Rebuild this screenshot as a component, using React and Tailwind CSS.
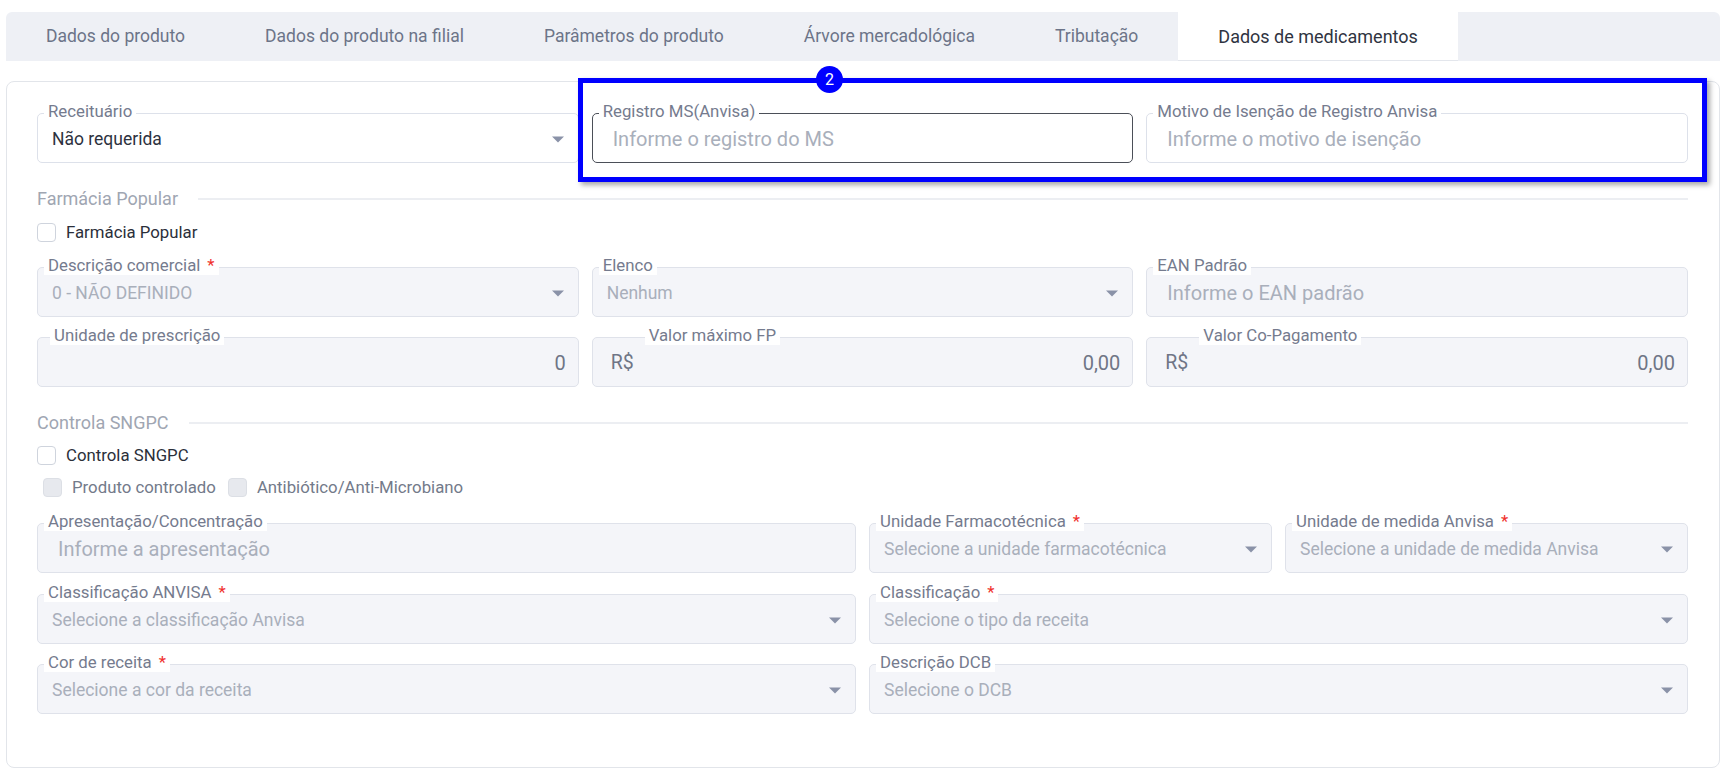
import React from 'react'

const font = { fontFamily: 'Roboto, "Noto Sans", sans-serif' }

const tabs = [
    'Dados do produto',
    'Dados do produto na filial',
    'Parâmetros do produto',
    'Árvore mercadológica',
    'Tributação',
    'Dados de medicamentos',
]

function Caret() {
    return (
        <svg width="12" height="7" viewBox="0 0 12 7" className="shrink-0">
            <path d="M0 0.5 L12 0.5 L6 6.5 Z" fill="#8a92a8" />
        </svg>
    )
}

// campo com label sobre a borda (estilo outlined)
function Field({ label, required, disabled, focused, select, input, placeholder, value, prefix, right, labelLeft = 'left-[6px]', className = '' }) {
    const box = focused
        ? 'border-[#4b4f58] bg-white'
        : disabled
            ? 'border-[#dfe2ea] bg-[#f4f5f9]'
            : 'border-[#dde1ea] bg-white'
    const filled = value && !disabled
    return (
        <div className={`relative h-[50px] rounded-[5px] border ${box} ${className}`}>
            <div className={`absolute -top-[13px] ${labelLeft} bg-white px-[4px] text-[16.8px] leading-[20px] text-[#757b8e] whitespace-nowrap`}>
                {label}
                {required && <span className="ml-[7px] text-[#f0302c]">*</span>}
            </div>
            <div className="flex h-full items-center pt-[2px]">
                {prefix && <span className="pl-[18px] text-[19.5px] text-[#6f7586]">{prefix}</span>}
                {select && (
                    <>
                        <span className={`flex-1 truncate pl-[14px] text-[17.5px] ${filled ? 'text-[#2d3240]' : 'text-[#a9afbb]'}`}>
                            {value || placeholder}
                        </span>
                        <span className="pr-[14px]"><Caret /></span>
                    </>
                )}
                {input && (
                    <span className="flex-1 truncate pl-[20px] text-[20px] text-[#a9afbb]">{placeholder}</span>
                )}
                {right && (
                    <span className="flex-1 pr-[12px] text-right text-[20px] text-[#6f7586]">{right}</span>
                )}
            </div>
        </div>
    )
}

function Section({ title }) {
    return (
        <div className="flex items-center gap-[20px]">
            <span className="text-[18px] leading-[20px] text-[#a0a6b2]">{title}</span>
            <div className="h-[2px] flex-1 bg-[#eceef2]" />
        </div>
    )
}

function Check({ label, disabled }) {
    return (
        <label className="flex items-center gap-[10px]">
            <span className={`h-[19px] w-[19px] rounded-[4px] border ${disabled ? 'border-[#dcdfe5] bg-[#e7e9ee]' : 'border-[#cfd4dd] bg-white'}`} />
            <span className={`text-[16.8px] leading-[20px] ${disabled ? 'text-[#737a8a]' : 'text-[#2b2f3a]'}`}>{label}</span>
        </label>
    )
}

export default function App() {
    return (
        <div className="relative min-h-screen bg-white pl-[6px] pr-[10px] pt-[12px]" style={font}>

            {/* ===== abas ===== */}
            <div className="flex h-[49px] rounded-t-[6px] bg-[#eef0f5]">
                {tabs.map((t, i) => {
                    const active = i === tabs.length - 1
                    return (
                        <div
                            key={t}
                            className={`flex items-center px-[40px] ${active ? 'border-b border-[#e3e6ec] bg-white text-[18px] text-[#2f3441]' : 'text-[17.5px] text-[#6c7488]'}`}
                        >
                            {t}
                        </div>
                    )
                })}
            </div>

            {/* ===== card ===== */}
            <div className="mt-[20px] flex flex-col rounded-[8px] border border-[#e2e5ea] pb-[53px] pl-[30px] pr-[31px] pt-[31px]">
                <div className="grid grid-cols-3 gap-[13px]">
                    <Field label="Receituário" select value="Não requerida" />
                    <Field label="Registro MS(Anvisa)" input focused placeholder="Informe o registro do MS" />
                    <Field label="Motivo de Isenção de Registro Anvisa" input placeholder="Informe o motivo de isenção" />
                </div>

                <div className="mt-[26px]"><Section title="Farmácia Popular" /></div>
                <div className="mt-[13px]"><Check label="Farmácia Popular" /></div>

                <div className="mt-[25px] grid grid-cols-3 gap-[13px]">
                    <Field label="Descrição comercial" required disabled select value="0 - NÃO DEFINIDO" />
                    <Field label="Elenco" disabled select value="Nenhum" />
                    <Field label="EAN Padrão" disabled input placeholder="Informe o EAN padrão" />
                </div>

                <div className="mt-[20px] grid grid-cols-3 gap-[13px]">
                    <Field label="Unidade de prescrição" disabled labelLeft="left-[12px]" right="0" />
                    <Field label="Valor máximo FP" disabled labelLeft="left-[52px]" prefix="R$" right="0,00" />
                    <Field label="Valor Co-Pagamento" disabled labelLeft="left-[52px]" prefix="R$" right="0,00" />
                </div>

                <div className="mt-[26px]"><Section title="Controla SNGPC" /></div>
                <div className="mt-[12px]"><Check label="Controla SNGPC" /></div>
                <div className="mt-[12px] flex gap-[12px] pl-[6px]">
                    <Check label="Produto controlado" disabled />
                    <Check label="Antibiótico/Anti-Microbiano" disabled />
                </div>

                <div className="mt-[26px] grid grid-cols-4 gap-[13px]">
                    <Field className="col-span-2" label="Apresentação/Concentração" disabled input placeholder="Informe a apresentação" />
                    <Field label="Unidade Farmacotécnica" required disabled select placeholder="Selecione a unidade farmacotécnica" />
                    <Field label="Unidade de medida Anvisa" required disabled select placeholder="Selecione a unidade de medida Anvisa" />
                </div>

                <div className="mt-[21px] grid grid-cols-2 gap-[13px]">
                    <Field label="Classificação ANVISA" required disabled select placeholder="Selecione a classificação Anvisa" />
                    <Field label="Classificação" required disabled select placeholder="Selecione o tipo da receita" />
                </div>

                <div className="mt-[20px] grid grid-cols-2 gap-[13px]">
                    <Field label="Cor de receita" required disabled select placeholder="Selecione a cor da receita" />
                    <Field label="Descrição DCB" disabled select placeholder="Selecione o DCB" />
                </div>
            </div>

            {/* ===== destaque (anotação) ===== */}
            <div className="pointer-events-none absolute left-[578px] top-[78px] h-[104px] w-[1129px] border-[5px] border-[#0000ff] shadow-[3px_3px_5px_rgba(0,0,0,0.35)]">
                <div className="absolute -top-[17px] left-[233px] flex h-[27px] w-[27px] items-center justify-center rounded-full bg-[#0000ff] text-[16px] text-white">
                    2
                </div>
            </div>
        </div>
    )
}
